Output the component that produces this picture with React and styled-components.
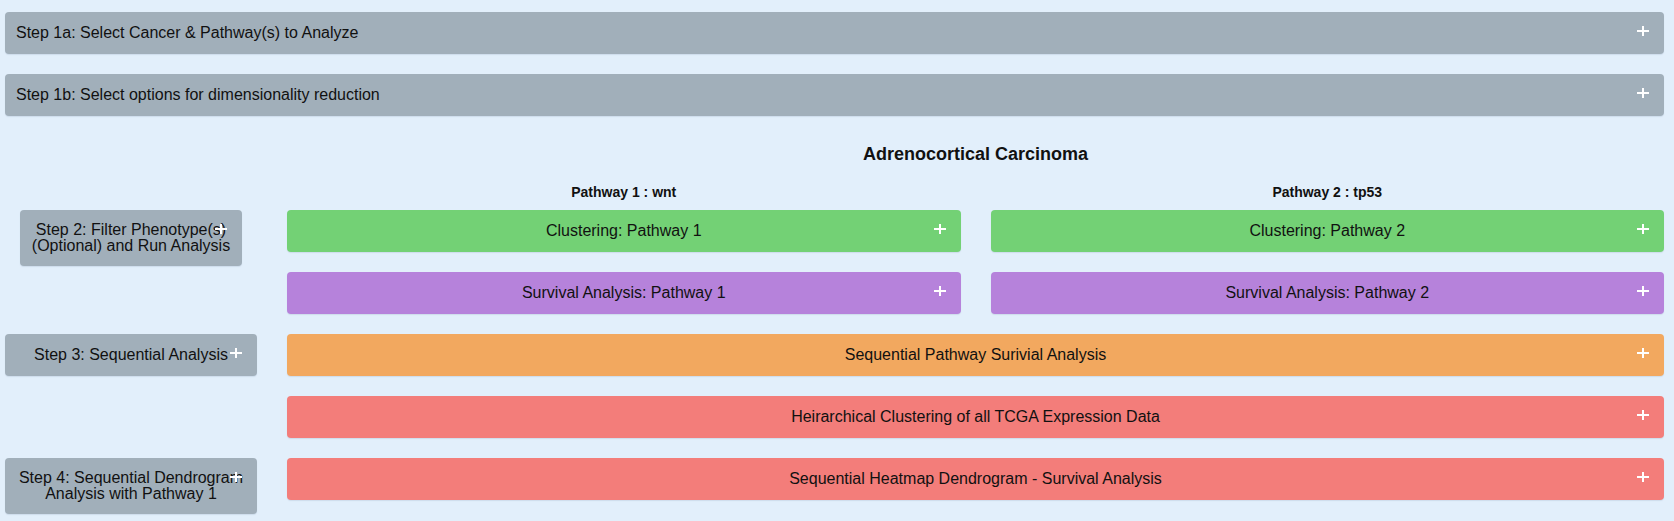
import styled, { createGlobalStyle } from 'styled-components'

const GlobalStyle = createGlobalStyle`
  html, body {
    margin: 0;
    padding: 0;
    background-color: #E2EFFB;
  }
  body {
    font-family: 'Liberation Sans', Arial, sans-serif;
    color: #111111;
  }
`

// white "+" toggle shown on every collapsible
function Plus({ $over }) {
    return (
        <PlusIcon $over={$over} width="12" height="10" viewBox="0 0 12 10">
            <line x1="0" y1="5" x2="12" y2="5" stroke="#ffffff" strokeWidth="2" />
            <line x1="6" y1="0" x2="6" y2="10" stroke="#ffffff" strokeWidth="2" />
        </PlusIcon>
    )
}

export default function App() {
    return (
        <>
            <GlobalStyle />
            <Page>
                <StepBar>
                    <span>Step 1a: Select Cancer &amp; Pathway(s) to Analyze</span>
                    <Plus />
                </StepBar>
                <StepBar>
                    <span>Step 1b: Select options for dimensionality reduction</span>
                    <Plus />
                </StepBar>

                <Header>
                    <Title>Adrenocortical Carcinoma</Title>
                    <Labels>
                        <Label>Pathway 1 : wnt</Label>
                        <Label>Pathway 2 : tp53</Label>
                    </Labels>
                </Header>

                <AnalysisGrid>
                    <StepBox $inset $rows={2}>
                        Step 2: Filter Phenotype(s) (Optional) and Run Analysis
                        <Plus $over />
                    </StepBox>
                    <ActionBar $color="#73D175">
                        <span>Clustering: Pathway 1</span>
                        <Plus />
                    </ActionBar>
                    <ActionBar $color="#73D175">
                        <span>Clustering: Pathway 2</span>
                        <Plus />
                    </ActionBar>
                    <ActionBar $color="#B682DB" $col={2}>
                        <span>Survival Analysis: Pathway 1</span>
                        <Plus />
                    </ActionBar>
                    <ActionBar $color="#B682DB">
                        <span>Survival Analysis: Pathway 2</span>
                        <Plus />
                    </ActionBar>

                    <StepBox>
                        Step 3: Sequential Analysis
                        <Plus $over />
                    </StepBox>
                    <ActionBar $color="#F2A85F" $wide>
                        <span>Sequential Pathway Surivial Analysis</span>
                        <Plus />
                    </ActionBar>

                    <ActionBar $color="#F37D7A" $wide $col={2}>
                        <span>Heirarchical Clustering of all TCGA Expression Data</span>
                        <Plus />
                    </ActionBar>

                    <StepBox>
                        Step 4: Sequential Dendrogram Analysis with Pathway 1
                        <Plus $over />
                    </StepBox>
                    <ActionBar $color="#F37D7A" $wide>
                        <span>Sequential Heatmap Dendrogram - Survival Analysis</span>
                        <Plus />
                    </ActionBar>
                </AnalysisGrid>
            </Page>
        </>
    )
}

const Page = styled.div`
    padding: 12px 10px 7px 5px;
    background-color: #E2EFFB;
`

const PlusIcon = styled.svg`
    flex-shrink: 0;
    align-self: start;
    justify-self: end;
    margin-top: 14px;
    margin-right: 15px;

    ${p => p.$over && `
        position: absolute;
        top: 0;
        right: 0;
    `}
`

const Panel = styled.div`
    position: relative;
    box-sizing: border-box;
    border-radius: 4px;
    box-shadow: 0 1px 1px rgba(60, 90, 120, 0.12);
    font-size: 16px;
    color: #111111;
`

const StepBar = styled(Panel)`
    display: flex;
    align-items: center;
    justify-content: space-between;
    height: 42px;
    padding-left: 11px;
    margin-bottom: 20px;
    background-color: #A1AFBA;
`

const Header = styled.div`
    margin-left: 282px;
    margin-top: 28px;
`

const Title = styled.div`
    text-align: center;
    font-size: 18px;
    font-weight: bold;
    line-height: 21px;
`

const Labels = styled.div`
    display: grid;
    grid-template-columns: 1fr 1fr;
    column-gap: 30px;
    margin-top: 19px;
`

const Label = styled.div`
    text-align: center;
    font-size: 14px;
    font-weight: bold;
    line-height: 16px;
`

const AnalysisGrid = styled.div`
    display: grid;
    grid-template-columns: 252px 1fr 1fr;
    column-gap: 30px;
    row-gap: 20px;
    align-items: start;
    margin-top: 10px;
`

const StepBox = styled(Panel)`
    grid-column: 1;
    grid-row: ${p => (p.$rows ? `span ${p.$rows}` : 'auto')};
    margin: 0 ${p => (p.$inset ? '15px' : '0')};
    padding: 12px 10px;
    min-height: 42px;
    display: flex;
    align-items: center;
    justify-content: center;
    text-align: center;
    line-height: 16px;
    background-color: #A1AFBA;
`

const ActionBar = styled(Panel)`
    grid-column: ${p => (p.$wide ? `${p.$col || 2} / span 2` : p.$col || 'auto')};
    display: grid;
    grid-template-columns: 1fr auto 1fr;
    align-items: center;
    height: 42px;
    background-color: ${p => p.$color};

    span {
        grid-column: 2;
    }
`
